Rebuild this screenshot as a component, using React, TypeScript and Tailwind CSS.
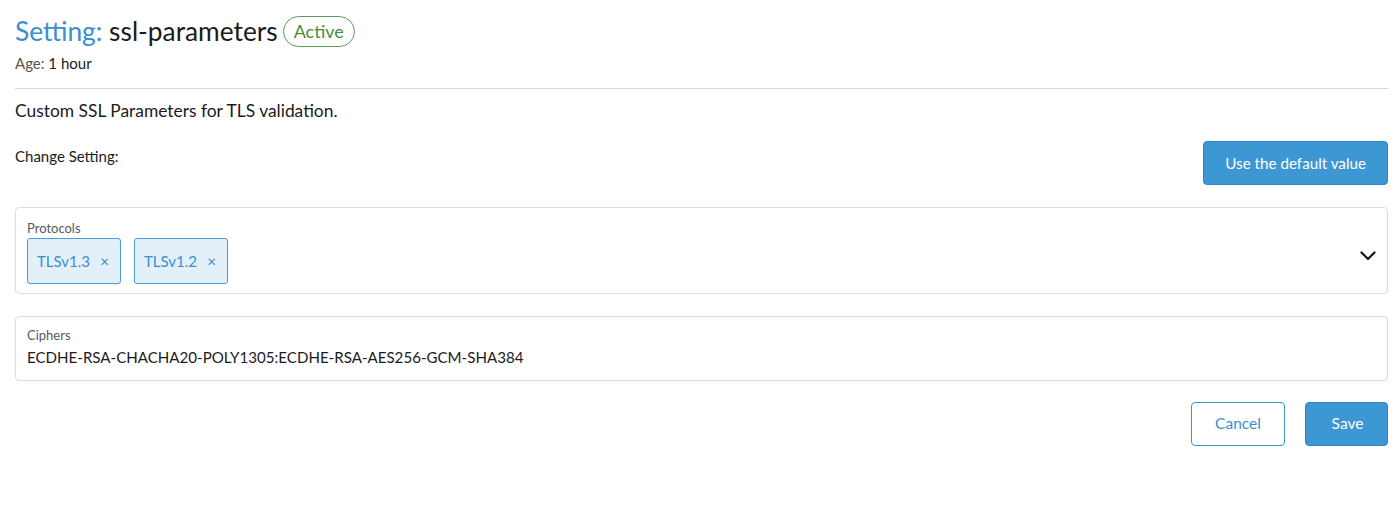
const tags = ["TLSv1.3", "TLSv1.2"];

export default function App() {
  return (
    <div
      className="min-h-[520px] w-full bg-white pl-[15px] pr-[12px] pt-[14px] text-[#1b1b1b]"
      style={{ fontFamily: "Lato, 'Noto Sans', sans-serif" }}
    >
      {/* Header */}
      <div className="flex items-center gap-[5px]">
        <h1 className="text-[26.3px] leading-[34px] font-normal">
          <span className="text-[#3a8fd0]">Setting:</span> ssl-parameters
        </h1>
        <span className="inline-flex h-[31px] items-center rounded-full border border-[#5c9c5c] px-[10px] text-[18px] text-[#4a8a40]">
          Active
        </span>
      </div>
      <div className="mt-[5px] text-[15px] leading-[20px]">
        <span className="text-[#555]">Age:</span> 1 hour
      </div>

      <hr className="mt-[15px] border-t border-[#d6d6da]" />

      <p className="mt-[10px] text-[17.4px] leading-[23px]">Custom SSL Parameters for TLS validation.</p>

      <div className="mt-[19px] flex items-start justify-between">
        <div className="pt-[5px] text-[15px] leading-[20px]">Change Setting:</div>
        <button className="h-[44px] rounded-[4px] border border-[#2f86c4] bg-[#3d97d3] px-[21px] text-[15.2px] text-white">
          Use the default value
        </button>
      </div>

      {/* Protocols */}
      <div className="mt-[22px] flex items-center rounded-[4px] border border-[#dcdce2] pb-[9px] pl-[11px] pr-[11px] pt-[12px]">
        <div className="flex-1">
          <div className="text-[13px] leading-[17px] text-[#5a5a5a]">Protocols</div>
          <div className="mt-[1px] flex gap-[13px]">
            {tags.map((t) => (
              <span
                key={t}
                className="inline-flex h-[46px] w-[94px] items-center justify-between rounded-[3px] border border-[#4a9dd8] bg-[#e3f0f9] pl-[9px] pr-[11px] text-[15px] text-[#3a8fd0]"
              >
                {t}
                <span className="text-[15px]">×</span>
              </span>
            ))}
          </div>
        </div>
        <svg width="16" height="10" viewBox="0 0 16 10" className="mt-[8px]">
          <path d="M1.5 1.5 L8 8 L14.5 1.5" fill="none" stroke="#111" strokeWidth="2.2" strokeLinecap="round" strokeLinejoin="round" />
        </svg>
      </div>

      {/* Ciphers */}
      <div className="mt-[22px] rounded-[4px] border border-[#dcdce2] pb-[12px] pl-[11px] pt-[10px]">
        <div className="text-[13px] leading-[17px] text-[#5a5a5a]">Ciphers</div>
        <div className="mt-[2px] text-[15.1px] leading-[22px]">
          ECDHE-RSA-CHACHA20-POLY1305:ECDHE-RSA-AES256-GCM-SHA384
        </div>
      </div>

      <div className="mt-[21px] flex justify-end gap-[20px]">
        <button className="h-[44px] w-[94px] rounded-[4px] border border-[#3d97d3] bg-white text-[15.5px] text-[#3a8fd0]">
          Cancel
        </button>
        <button className="h-[44px] w-[83px] rounded-[4px] border border-[#2f86c4] bg-[#3d97d3] pl-[2px] text-[15.5px] text-white">
          Save
        </button>
      </div>
    </div>
  );
}
